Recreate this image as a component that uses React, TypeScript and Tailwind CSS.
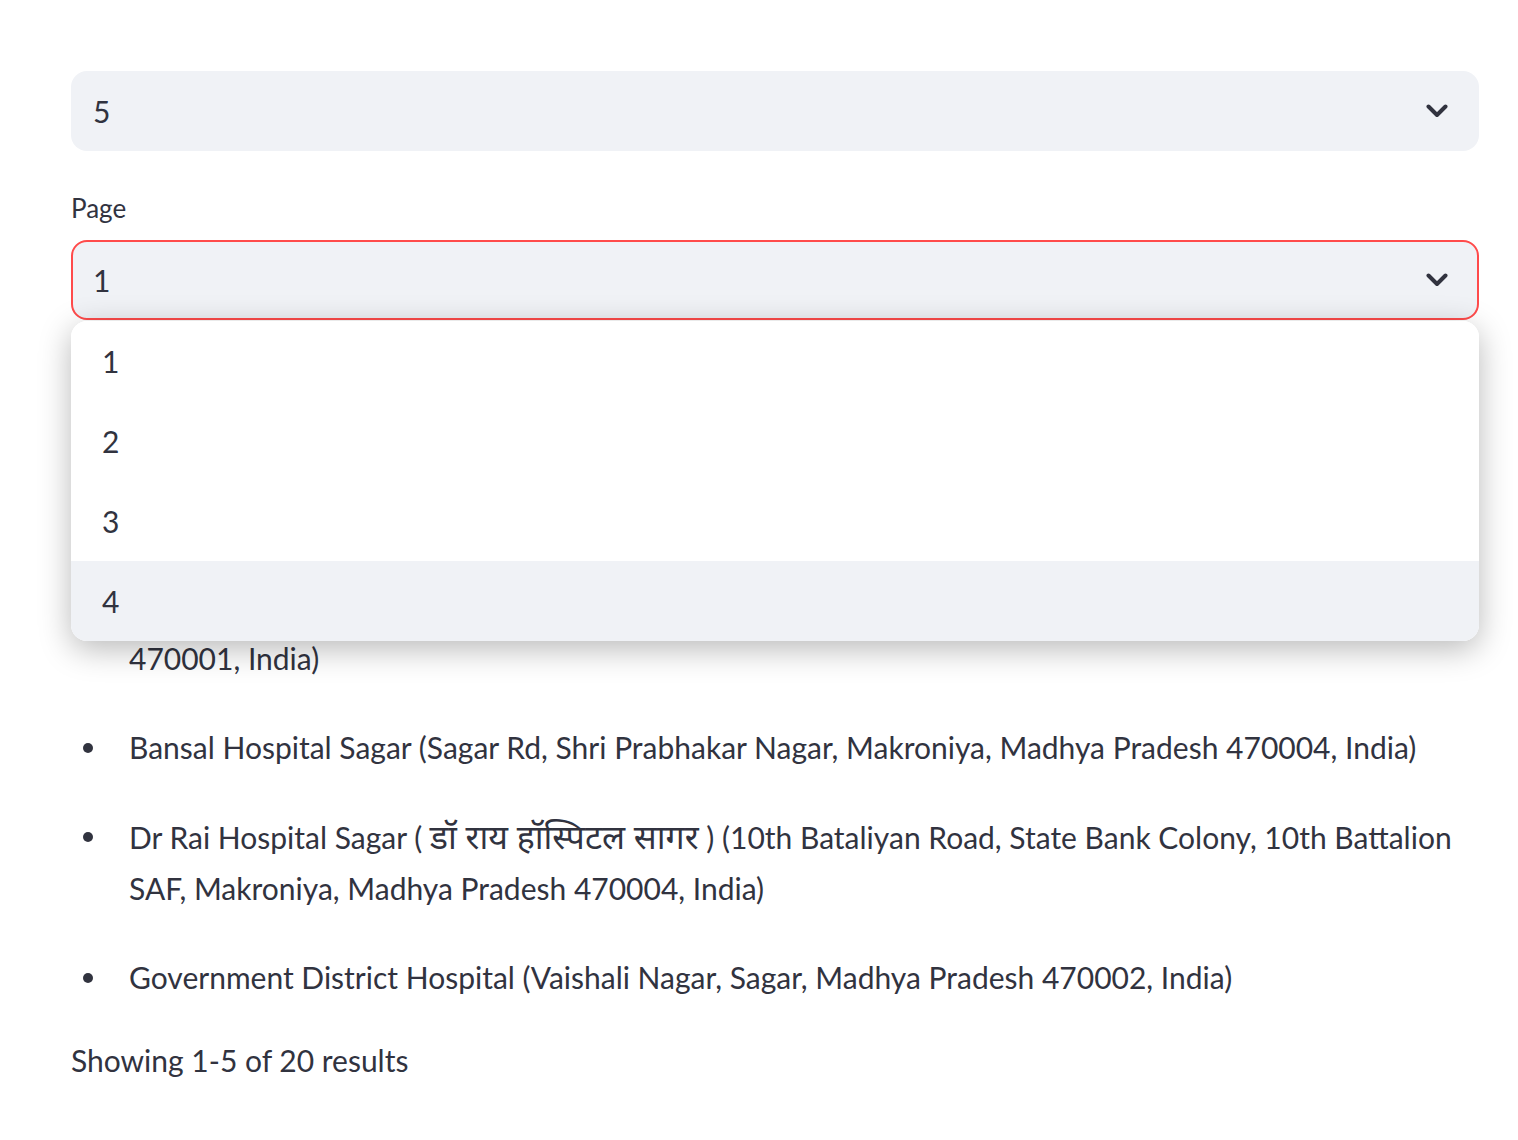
import {useState, type ReactNode} from "react";

const ChevronDown = () => (
    <svg width="22" height="14" viewBox="0 0 22 14" fill="none">
        <path d="M2.5 2.5 L11 11 L19.5 2.5" stroke="#31333f" strokeWidth="4" strokeLinecap="round" strokeLinejoin="round" />
    </svg>
);

const Select = ({value, focused}: {value: string; focused?: boolean}) => (
    <div
        className={`flex h-[80px] items-center justify-between rounded-[16px] border-2 bg-[#f0f2f6] pl-[20px] pr-[29px] ${focused ? 'border-[#ff4b4b]' : 'border-transparent'}`}
    >
        <span className="text-[30px]">{value}</span>
        <ChevronDown />
    </div>
);

const hospitals: ReactNode[] = [
    "Bundelkhand Medical College Hospital (Tili Road, Medical College Campus, Sagar, Madhya Pradesh 470001, India)",
    "Sagar Multi Speciality Hospital (Civil Lines, Near Collectorate, Gopalganj, Sagar, Madhya Pradesh 470001, India)",
    "Bansal Hospital Sagar (Sagar Rd, Shri Prabhakar Nagar, Makroniya, Madhya Pradesh 470004, India)",
    <>
        Dr Rai Hospital Sagar ( <span className="text-[34px] leading-[30px]">डॉ राय हॉस्पिटल सागर</span> ) (10th Bataliyan Road, State Bank Colony, 10th Battalion SAF, Makroniya, Madhya Pradesh 470004, India)
    </>,
    "Government District Hospital (Vaishali Nagar, Sagar, Madhya Pradesh 470002, India)",
];

export default function App() {
    const [hovered] = useState(3);

    return (
        <div className="min-h-[1140px] bg-white font-[Lato,'Noto_Sans_Devanagari','Noto_Sans',sans-serif] text-[#31333f]">
            <div className="ml-[71px] w-[1408px] pt-[71px]">
                <Select value="5" />

                <div className="mt-[33px] mb-[8px] flex h-[48px] items-center text-[26px]">Page</div>

                <div className="relative">
                    <Select value="1" focused />
                    {/* open dropdown menu */}
                    <ul className="absolute left-0 right-0 top-[81px] z-10 overflow-hidden rounded-[16px] bg-white shadow-[0_8px_32px_rgba(0,0,0,0.28)]">
                        {["1", "2", "3", "4"].map((opt, i) => (
                            <li
                                key={opt}
                                className={`flex h-[80px] items-center pl-[31px] text-[30px] ${i === hovered ? 'bg-[#f0f2f6]' : 'bg-white'}`}
                            >
                                {opt}
                            </li>
                        ))}
                    </ul>
                </div>

                <ul className="mt-[121px]">
                    {hospitals.map((h, i) => (
                        <li key={i} className={`flex text-[30px] leading-[51px] ${i < hospitals.length - 1 ? 'mb-[38.5px]' : ''}`}>
                            <span className="flex h-[51px] w-[58px] shrink-0 items-center pl-[12px]">
                                <span className="h-[10px] w-[10px] rounded-full bg-[#31333f]" />
                            </span>
                            <span>{h}</span>
                        </li>
                    ))}
                </ul>

                <p className="mt-[32px] text-[30px] leading-[51px]">Showing 1-5 of 20 results</p>
            </div>
        </div>
    );
}
